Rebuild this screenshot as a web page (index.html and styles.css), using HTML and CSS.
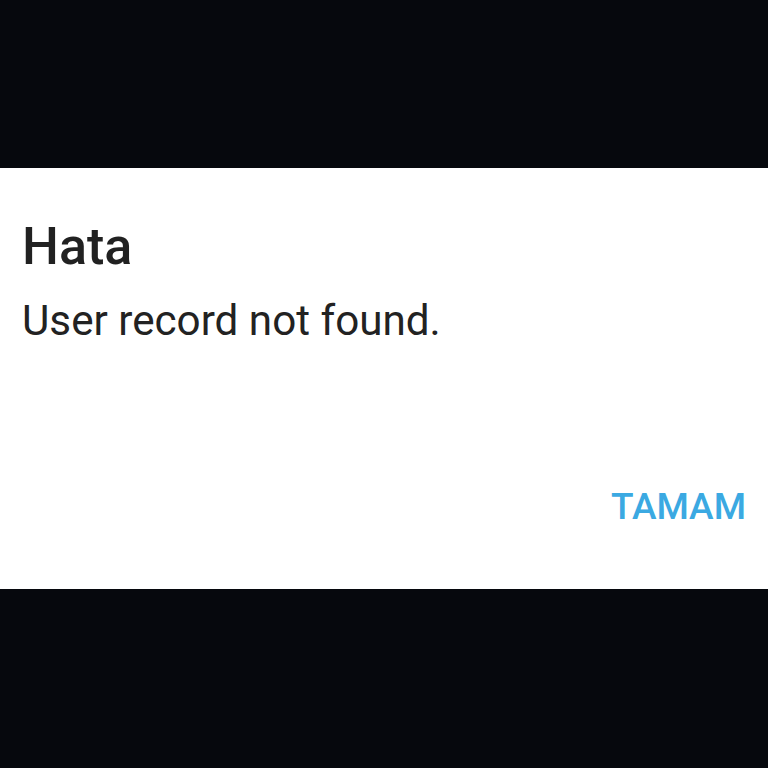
FILE: index.html
```html
<!DOCTYPE html>
<html lang="tr">
<head>
<meta charset="utf-8">
<link rel="stylesheet" href="styles.css">
</head>
<body>
<div class="screen">
  <div class="band"></div>
  <div class="dialog">
    <h1 class="title">Hata</h1>
    <p class="message">User record not found.</p>
    <div class="actions">
      <span class="btn">TAMAM</span>
    </div>
  </div>
  <div class="band band-fill"></div>
</div>
</body>
</html>
```

FILE: styles.css
```css
html, body {
  margin: 0;
  padding: 0;
  background: #06080d;
}
.screen {
  width: 768px;
  height: 768px;
  display: flex;
  flex-direction: column;
  font-family: Roboto, "Noto Sans", sans-serif;
}
.band {
  height: 168px;
  background: #06080d;
}
.band-fill {
  flex: 1;
}
.dialog {
  height: 421px;
  background: #ffffff;
  box-sizing: border-box;
  padding: 0 22px;
  display: flex;
  flex-direction: column;
}
.title {
  margin: 48px 0 0;
  font-size: 52px;
  font-weight: 500;
  line-height: 62px;
  color: #212121;
}
.message {
  margin: 18px 0 0;
  font-size: 42.2px;
  font-weight: 400;
  line-height: 50px;
  color: #222222;
}
.actions {
  margin-top: auto;
  margin-bottom: 62px;
  display: flex;
  justify-content: flex-end;
}
.btn {
  font-size: 37px;
  font-weight: 500;
  line-height: 40px;
  color: #3ba9e2;
}
```
